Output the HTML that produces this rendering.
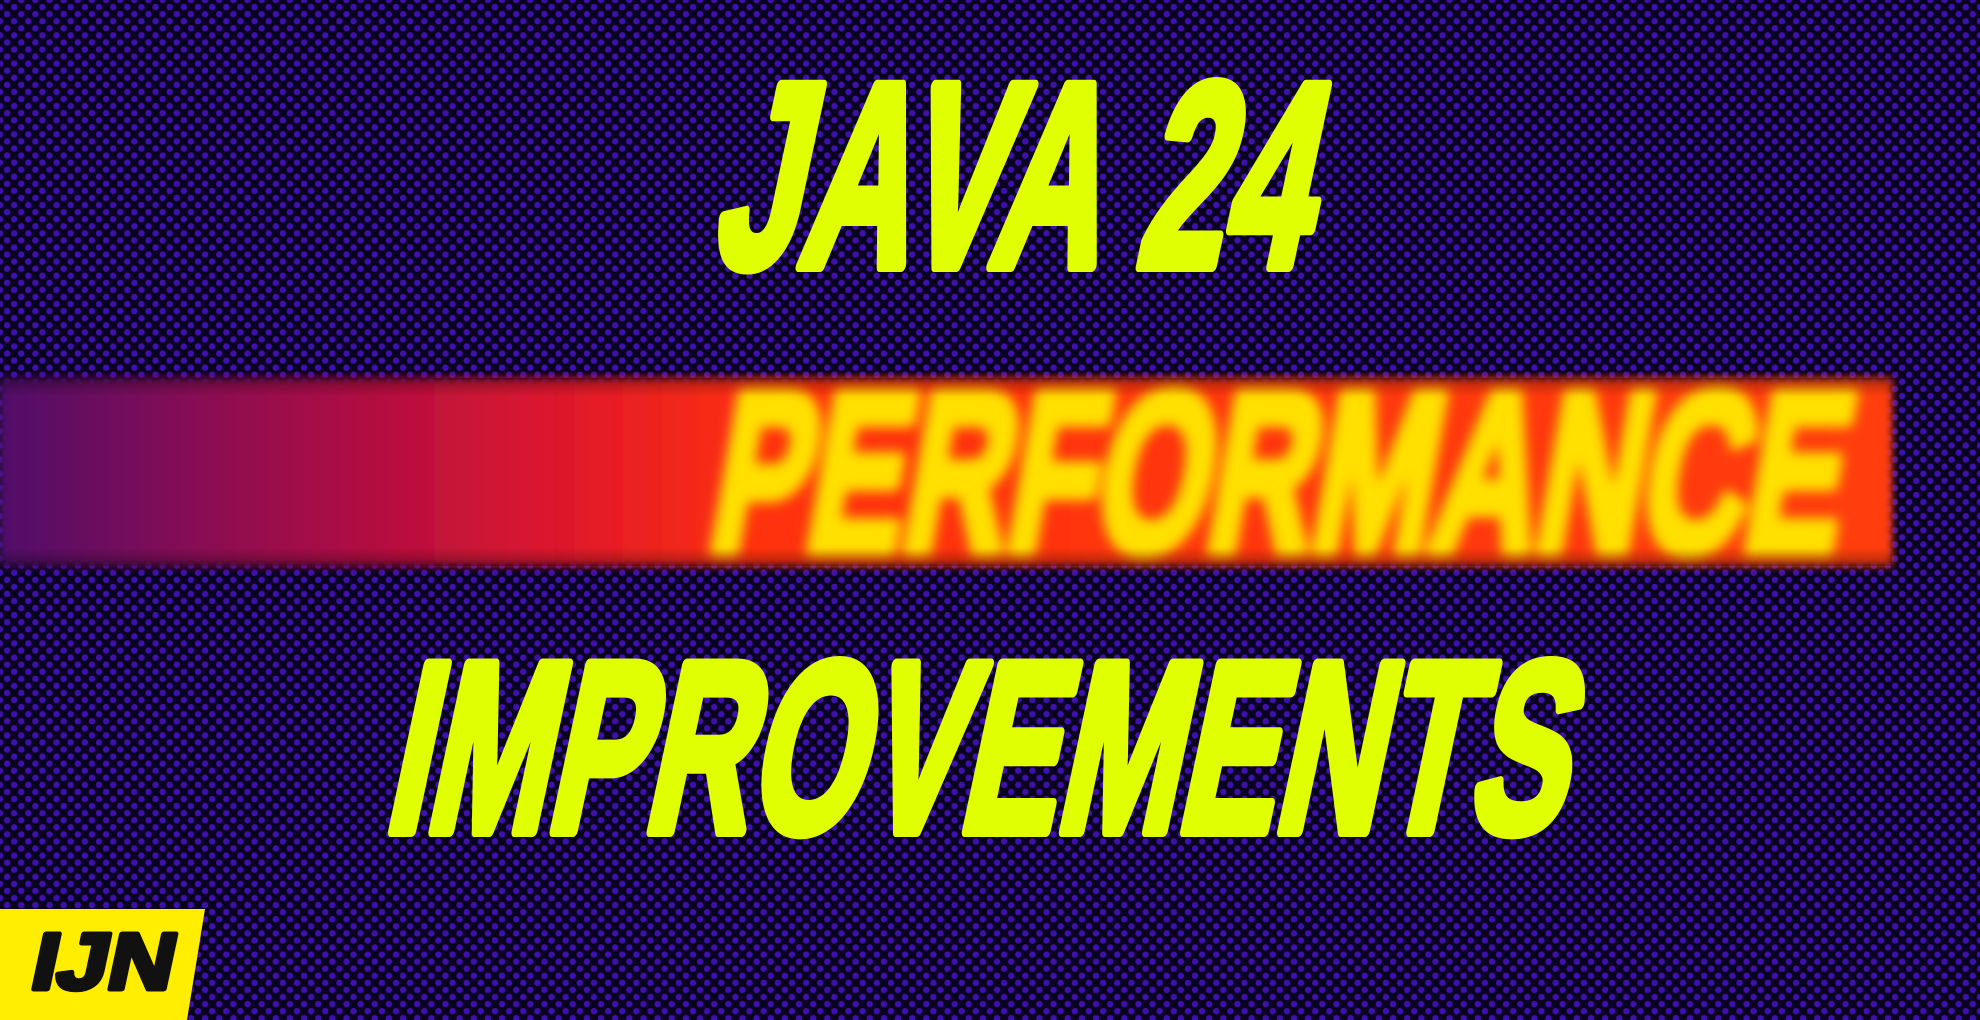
<!DOCTYPE html>
<html><head><meta charset="utf-8"><style>
html,body{margin:0;padding:0;width:1980px;height:1020px;overflow:hidden;background:#12062e}
svg{display:block}
</style></head><body>
<svg width="1980" height="1020" viewBox="0 0 1980 1020" xmlns="http://www.w3.org/2000/svg">
<defs>
<pattern id="dots" width="10" height="10" patternUnits="userSpaceOnUse" patternTransform="rotate(45)">
<rect width="10" height="10" fill="#0a0320"/>
<circle cx="5" cy="5" r="3.2" fill="#3e10ae"/>
</pattern>
<linearGradient id="band" x1="0" x2="1" y1="0" y2="0">
<stop offset="0" stop-color="#50086a"/>
<stop offset="0.12" stop-color="#900c50"/>
<stop offset="0.28" stop-color="#d81430"/>
<stop offset="0.4" stop-color="#ff3010"/>
<stop offset="1" stop-color="#ff3c10"/>
</linearGradient>
<linearGradient id="vfade" x1="0" x2="0" y1="0" y2="1">
<stop offset="0" stop-color="#000" stop-opacity="0.3"/>
<stop offset="0.1" stop-color="#000" stop-opacity="0"/>
<stop offset="0.9" stop-color="#000" stop-opacity="0"/>
<stop offset="1" stop-color="#000" stop-opacity="0.3"/>
</linearGradient>
<filter id="blur"><feGaussianBlur stdDeviation="6"/></filter>
<filter id="blur2"><feGaussianBlur stdDeviation="4"/></filter>
</defs>
<rect width="1980" height="1020" fill="url(#dots)"/>
<rect x="0" y="378" width="1892" height="188" fill="url(#band)" filter="url(#blur2)"/>
<g filter="url(#blur)">
<text transform="translate(705,550) skewX(-10)" font-family="Liberation Sans, sans-serif" font-weight="bold" font-size="225" fill="#ffe000" stroke="#ffe000" stroke-width="14" stroke-linejoin="round" textLength="1130" lengthAdjust="spacingAndGlyphs">PERFORMANCE</text>
</g>
<rect x="0" y="378" width="1892" height="188" fill="url(#vfade)"/>
<text transform="translate(710,266) skewX(-12)" font-family="Liberation Sans, sans-serif" font-weight="bold" font-size="262" fill="#e0ff00" stroke="#e0ff00" stroke-width="12" stroke-linejoin="round" textLength="595" lengthAdjust="spacingAndGlyphs">JAVA 24</text>
<text transform="translate(382,831) skewX(-12)" font-family="Liberation Sans, sans-serif" font-weight="bold" font-size="242" fill="#e0ff00" stroke="#e0ff00" stroke-width="12" stroke-linejoin="round" textLength="1180" lengthAdjust="spacingAndGlyphs">IMPROVEMENTS</text>
<polygon points="0,909 205,909 187,1020 0,1020" fill="#ffee00"/>
<text transform="translate(28,989) skewX(-12)" font-family="Liberation Sans, sans-serif" font-weight="bold" font-size="80" fill="#111" stroke="#111" stroke-width="5" stroke-linejoin="round" textLength="142" lengthAdjust="spacingAndGlyphs">IJN</text>
</svg>
</body></html>
